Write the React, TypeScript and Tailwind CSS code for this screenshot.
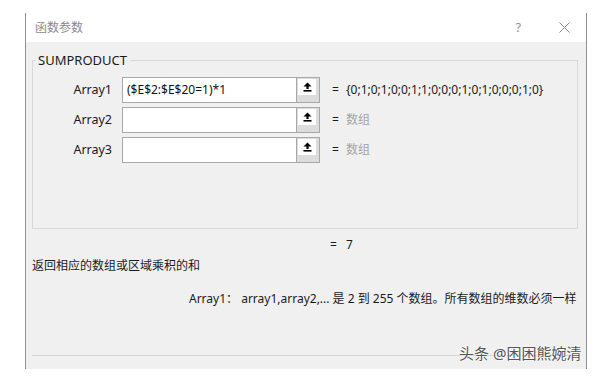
import React from 'react';

const font = { fontFamily: '"Noto Sans", "Noto Sans CJK SC", sans-serif' };

const RefIcon = () => (
  <svg width="9" height="10" viewBox="0 0 9 10">
    <path d="M4.5 0.5 L8.5 4.5 L5.6 4.5 L5.6 7 L3.4 7 L3.4 4.5 L0.5 4.5 Z" fill="#000" />
    <rect x="0.5" y="8" width="8" height="1.6" fill="#000" />
  </svg>
);

const ArgRow: React.FC<{ label: string; value?: string; result: string; hint?: boolean }> = ({
  label,
  value,
  result,
  hint,
}) => (
  <div className="flex h-[26px] items-center">
    <div className="w-[80px] pr-[1px] text-right text-[12.5px] text-[#1a1a1a]">{label}</div>
    <div className="ml-[9px] flex h-[26px] w-[175px] items-center border border-[#a8a8a8] bg-white pl-[4px] text-[12px] text-[#111]">
      {value}
    </div>
    <div className="flex h-[26px] w-[23px] flex-col border border-l-0 border-[#a8a8a8] bg-[#dcdcdc]">
      <div className="ml-[1px] mt-[1px] flex h-[16px] w-[18px] items-center justify-center bg-white">
        <RefIcon />
      </div>
    </div>
    <div className="ml-[12px] w-[14px] text-[12px] text-[#1a1a1a]">=</div>
    <div className={`text-[12px] ${hint ? 'text-[#a5a5a5]' : 'text-[#1a1a1a]'}`}>{result}</div>
  </div>
);

export default function App() {
  return (
    <div className="relative h-[378px] w-[606px] overflow-hidden bg-white pl-[25px] pt-[13px]" style={font}>
      <div className="flex h-[356px] w-[562px] flex-col border-x border-x-[#8f8f8f]">
        {/* title bar */}
        <div className="flex h-[29px] items-center bg-white pl-[9px] pr-[16px]">
          <span className="text-[12px] text-[#8a8a8a]">函数参数</span>
          <span className="ml-auto text-[12px] text-[#8a8a8a]">?</span>
          <svg className="ml-[38px]" width="11" height="11" viewBox="0 0 11 11">
            <path d="M0.5 0.5 L10.5 10.5 M10.5 0.5 L0.5 10.5" stroke="#8a8a8a" strokeWidth="1" />
          </svg>
        </div>

        {/* body */}
        <div className="flex flex-1 flex-col bg-[#f0f0f0]">
          <fieldset className="ml-[6px] mt-[9px] h-[178px] w-[546px] border border-[#d9d9d9]">
            <legend className="ml-[2px] px-[3px] text-[13px] leading-[18px] text-[#1a1a1a]">SUMPRODUCT</legend>
            <div className="flex flex-col gap-[4px] pt-[8px]">
              <ArgRow label="Array1" value="($E$2:$E$20=1)*1" result="{0;1;0;1;0;0;1;1;0;0;0;1;0;1;0;0;0;1;0}" />
              <ArgRow label="Array2" result="数组" hint />
              <ArgRow label="Array3" result="数组" hint />
            </div>
          </fieldset>

          <div className="mt-[8px] flex pl-[304px] text-[12px] leading-[16px] text-[#1a1a1a]">
            <span className="w-[16px]">=</span>
            <span>7</span>
          </div>

          <div className="ml-[6px] mt-[5px] text-[12px] leading-[16px] text-[#1a1a1a]">返回相应的数组或区域乘积的和</div>

          <div className="ml-[163px] mt-[17px] whitespace-nowrap text-[12px] leading-[16px] text-[#1a1a1a]">
            Array1：&nbsp;array1,array2,... 是 2 到 255 个数组。所有数组的维数必须一样
          </div>

          <div className="ml-[6px] mt-auto mb-[13px] h-px w-[546px] bg-[#d4d4d4]" />
        </div>
      </div>

      {/* watermark */}
      <div
        className="absolute left-[459px] top-[343px] whitespace-nowrap text-[15px] leading-[20px] text-[#555]"
        style={{ textShadow: '0 0 2px #fff, 0 0 2px #fff' }}
      >
        头条 @困困熊婉清
      </div>
    </div>
  );
}
